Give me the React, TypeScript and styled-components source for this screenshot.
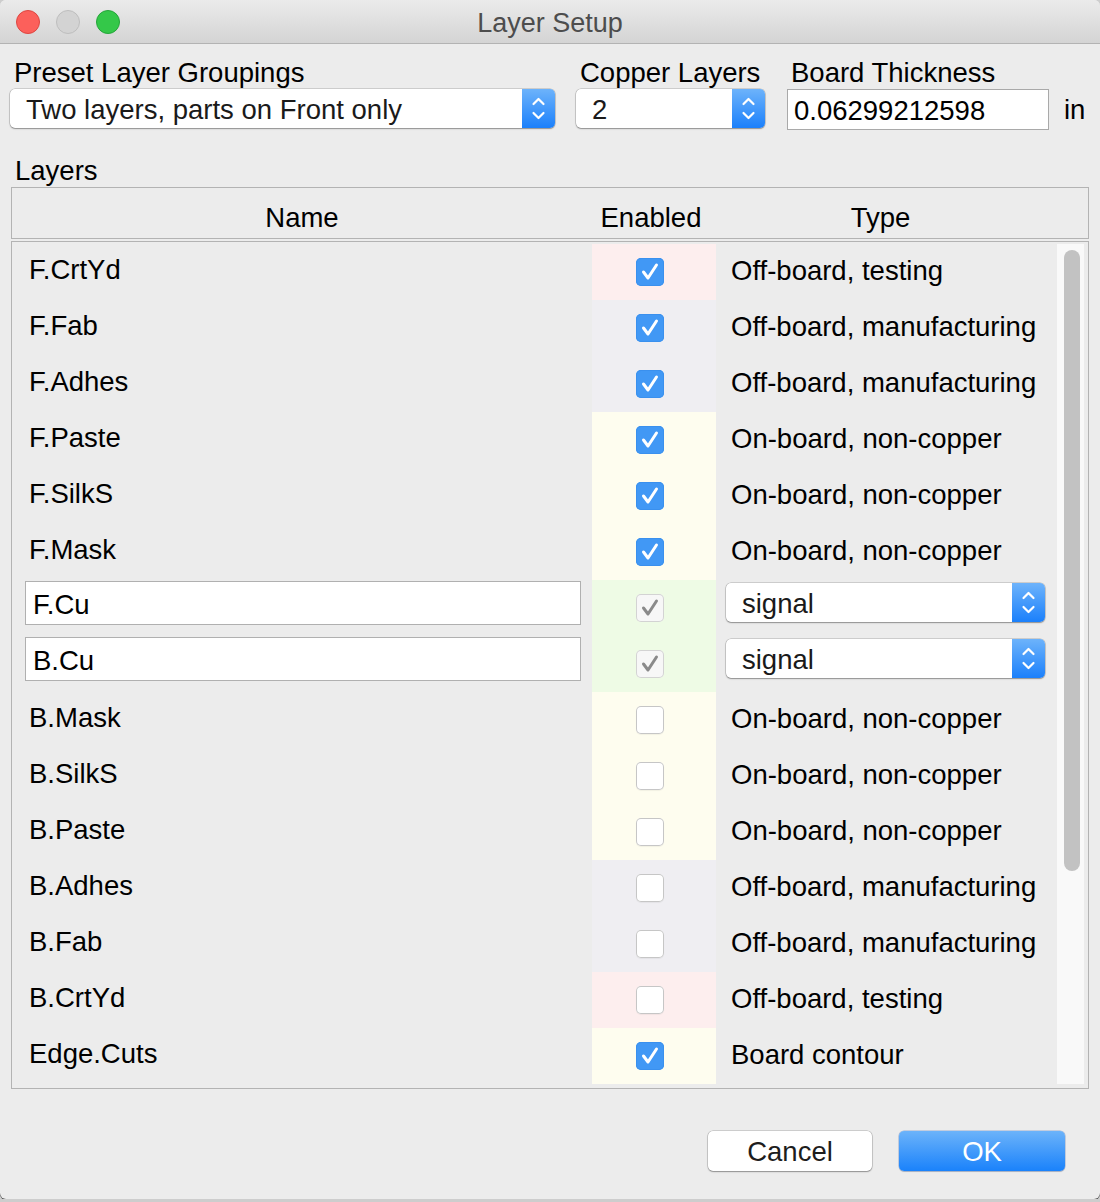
import React from 'react';
import styled, { createGlobalStyle, css } from 'styled-components';

const GlobalStyle = createGlobalStyle`
  html, body { margin: 0; padding: 0; background: #cdcdcd; }
  body {
    font-family: "Liberation Sans", Arial, sans-serif;
    font-size: 27.5px;
    color: #000;
  }
  * { box-sizing: border-box; }
`;

const Window = styled.div`
  width: 1100px;
  height: 1199px;
  background: #ececec;
  border-radius: 6px;
  overflow: hidden;
  display: flex;
  flex-direction: column;
  box-shadow: 0 1px 0 #4a4a4a;
`;

const TitleBar = styled.div`
  height: 44px;
  flex: none;
  display: grid;
  grid-template-columns: 1fr auto 1fr;
  align-items: center;
  background: linear-gradient(#ebebeb, #d4d4d4);
  border-bottom: 1px solid #b3b3b3;
`;

const Lights = styled.div`
  display: flex;
  gap: 16px;
  padding-left: 16px;
`;

const Light = styled.span<{ $fill: string; $edge: string }>`
  width: 24px;
  height: 24px;
  border-radius: 50%;
  background: ${(p) => p.$fill};
  border: 1px solid ${(p) => p.$edge};
`;

const Title = styled.div`
  color: #4d4d4d;
  font-size: 27px;
  line-height: 32px;
  padding-top: 2px;
`;

const Content = styled.div`
  padding: 13px 11px 0 10px;
  display: flex;
  flex-direction: column;
`;

const TopRow = styled.div`
  display: flex;
  align-items: flex-start;
`;

const Field = styled.div<{ $w: number; $gap: number }>`
  width: ${(p) => p.$w}px;
  margin-left: ${(p) => p.$gap}px;
  display: flex;
  flex-direction: column;
`;

const Label = styled.div`
  line-height: 32px;
  padding-left: 4px;
  white-space: nowrap;
`;

const Combo = styled.div<{ $w?: number }>`
  display: flex;
  height: 39px;
  width: ${(p) => (p.$w ? `${p.$w}px` : 'auto')};
  background: #fff;
  border-radius: 5px;
  overflow: hidden;
  box-shadow: 0 0 0 0.5px rgba(0, 0, 0, 0.25), 0 1px 1.5px rgba(0, 0, 0, 0.3);
`;

const ComboText = styled.span`
  flex: 1;
  padding: 2px 0 0 16px;
  line-height: 37px;
  color: #1a1a1a;
  white-space: nowrap;
  overflow: hidden;
`;

const Stepper = styled.span`
  width: 33px;
  flex: none;
  background: linear-gradient(#6db3fb, #1b80fb);
  display: flex;
  align-items: center;
  justify-content: center;
`;

const TextBox = styled.div`
  height: 41px;
  background: #fff;
  border: 1px solid #a9a9a9;
  padding: 3px 0 0 6px;
  line-height: 36px;
`;

const Unit = styled.span`
  margin: 32px 0 0 15px;
  line-height: 41px;
`;

const SectionLabel = styled.div`
  margin-top: 25px;
  line-height: 32px;
  padding-left: 5px;
`;

const TableHeader = styled.div`
  margin-left: 1px;
  width: 1078px;
  height: 52px;
  border: 1px solid #b3b3b3;
  display: grid;
  grid-template-columns: 580px 118px 341px 1fr;
  padding-top: 14px;
`;

const HeaderCell = styled.div`
  text-align: center;
  line-height: 32px;
  white-space: nowrap;
`;

const TableBody = styled.div`
  margin-left: 1px;
  margin-top: 2px;
  width: 1078px;
  height: 848px;
  border: 1px solid #b3b3b3;
  padding: 2px 4px 4px 0;
  display: flex;
`;

const Rows = styled.div`
  width: 1045px;
  display: flex;
  flex-direction: column;
`;

const Row = styled.div`
  height: 56px;
  display: grid;
  grid-template-columns: 580px 124px 341px;
`;

const NameCell = styled.div<{ $editing?: boolean }>`
  display: flex;
  white-space: nowrap;
  ${(p) =>
    p.$editing
      ? css`
          align-items: flex-start;
          padding: 1px 0 0 13px;
        `
      : css`
          align-items: center;
          padding: 0 0 4px 17px;
        `}
`;

const NameInput = styled.div`
  width: 556px;
  height: 44px;
  background: #fff;
  border: 1px solid #b0b0b0;
  padding: 3px 0 0 7px;
  line-height: 39px;
`;

const EnabledCell = styled.div<{ $bg: string }>`
  background: ${(p) => p.$bg};
  display: flex;
  align-items: center;
  justify-content: center;
  padding-right: 8px;
`;

const TypeCell = styled.div<{ $editing?: boolean }>`
  display: flex;
  white-space: nowrap;
  ${(p) =>
    p.$editing
      ? css`
          align-items: flex-start;
          padding: 3px 0 0 10px;
        `
      : css`
          align-items: center;
          padding: 0 0 3px 15px;
        `}
`;

const Box = styled.span<{ $state: 'on' | 'off' | 'locked' }>`
  width: 28px;
  height: 28px;
  border-radius: 5px;
  display: flex;
  align-items: center;
  justify-content: center;
  ${(p) =>
    p.$state === 'on'
      ? css`
          background: #4198f5;
          box-shadow: inset 0 0 0 1px #3a90ee;
        `
      : p.$state === 'off'
      ? css`
          background: #fff;
          box-shadow: inset 0 0 0 1px #c6c6c6, 0 1px 1px rgba(0, 0, 0, 0.05);
        `
      : css`
          background: #f7f7f7;
          box-shadow: inset 0 0 0 1px #d3d3d3;
        `}
`;

const Track = styled.div`
  width: 27px;
  background: #f9f9f9;
  padding: 6px 0 0 7px;
`;

const Thumb = styled.div`
  width: 16px;
  height: 621px;
  border-radius: 8px;
  background: #c2c2c2;
`;

const ButtonRow = styled.div`
  margin-top: 42px;
  display: flex;
  justify-content: flex-end;
  gap: 27px;
  padding-right: 24px;
`;

const Button = styled.button<{ $primary?: boolean }>`
  height: 40px;
  width: ${(p) => (p.$primary ? 166 : 164)}px;
  border: none;
  border-radius: 5px;
  font-family: inherit;
  font-size: 27.5px;
  padding: 2px 0 0;
  ${(p) =>
    p.$primary
      ? css`
          background: linear-gradient(#6cb3fa, #1a82fb);
          color: #fff;
          box-shadow: 0 0 0 0.5px rgba(0, 60, 160, 0.35), 0 1px 1px rgba(0, 0, 0, 0.15);
        `
      : css`
          background: #fff;
          color: #1d1d1d;
          box-shadow: 0 0 0 0.5px rgba(0, 0, 0, 0.25), 0 1px 1.5px rgba(0, 0, 0, 0.3);
        `}
`;

const StepperIcon = () => (
  <svg width="33" height="39" viewBox="0 0 33 39">
    <path d="M11.5 15 L16.5 10 L21.5 15" fill="none" stroke="#fff" strokeWidth="2.2" strokeLinecap="round" strokeLinejoin="round" />
    <path d="M11.5 24 L16.5 29 L21.5 24" fill="none" stroke="#fff" strokeWidth="2.2" strokeLinecap="round" strokeLinejoin="round" />
  </svg>
);

const CheckMark = ({ color, w }: { color: string; w: number }) => (
  <svg width="28" height="28" viewBox="0 0 28 28">
    <path d="M7.5 14 L12 20 L20.5 7" fill="none" stroke={color} strokeWidth={w} strokeLinecap="round" strokeLinejoin="round" />
  </svg>
);

const Checkbox = ({ state }: { state: 'on' | 'off' | 'locked' }) => (
  <Box $state={state}>
    {state === 'on' && <CheckMark color="#fff" w={3} />}
    {state === 'locked' && <CheckMark color="#8a8a8a" w={3} />}
  </Box>
);

const SelectBox = ({ text, width }: { text: string; width?: number }) => (
  <Combo $w={width}>
    <ComboText>{text}</ComboText>
    <Stepper>
      <StepperIcon />
    </Stepper>
  </Combo>
);

const PINK = '#fdeeee';
const LAV = '#efeef2';
const YEL = '#fefdef';
const GRN = '#eefbe5';

type Layer = {
  name: string;
  type: string;
  bg: string;
  state: 'on' | 'off' | 'locked';
  copper?: boolean;
};

const layers: Layer[] = [
  { name: 'F.CrtYd', type: 'Off-board, testing', bg: PINK, state: 'on' },
  { name: 'F.Fab', type: 'Off-board, manufacturing', bg: LAV, state: 'on' },
  { name: 'F.Adhes', type: 'Off-board, manufacturing', bg: LAV, state: 'on' },
  { name: 'F.Paste', type: 'On-board, non-copper', bg: YEL, state: 'on' },
  { name: 'F.SilkS', type: 'On-board, non-copper', bg: YEL, state: 'on' },
  { name: 'F.Mask', type: 'On-board, non-copper', bg: YEL, state: 'on' },
  { name: 'F.Cu', type: 'signal', bg: GRN, state: 'locked', copper: true },
  { name: 'B.Cu', type: 'signal', bg: GRN, state: 'locked', copper: true },
  { name: 'B.Mask', type: 'On-board, non-copper', bg: YEL, state: 'off' },
  { name: 'B.SilkS', type: 'On-board, non-copper', bg: YEL, state: 'off' },
  { name: 'B.Paste', type: 'On-board, non-copper', bg: YEL, state: 'off' },
  { name: 'B.Adhes', type: 'Off-board, manufacturing', bg: LAV, state: 'off' },
  { name: 'B.Fab', type: 'Off-board, manufacturing', bg: LAV, state: 'off' },
  { name: 'B.CrtYd', type: 'Off-board, testing', bg: PINK, state: 'off' },
  { name: 'Edge.Cuts', type: 'Board contour', bg: YEL, state: 'on' },
];

export default function App() {
  return (
    <>
      <GlobalStyle />
      <Window>
        <TitleBar>
          <Lights>
            <Light $fill="#fc605b" $edge="#de4641" />
            <Light $fill="#d3d3d3" $edge="#bebebe" />
            <Light $fill="#34c849" $edge="#25a53a" />
          </Lights>
          <Title>Layer Setup</Title>
          <span />
        </TitleBar>
        <Content>
          <TopRow>
            <Field $w={545} $gap={0}>
              <Label>Preset Layer Groupings</Label>
              <SelectBox text="Two layers, parts on Front only" />
            </Field>
            <Field $w={189} $gap={21}>
              <Label>Copper Layers</Label>
              <SelectBox text="2" />
            </Field>
            <Field $w={262} $gap={22}>
              <Label>Board Thickness</Label>
              <TextBox>0.06299212598</TextBox>
            </Field>
            <Unit>in</Unit>
          </TopRow>
          <SectionLabel>Layers</SectionLabel>
          <TableHeader>
            <HeaderCell>Name</HeaderCell>
            <HeaderCell>Enabled</HeaderCell>
            <HeaderCell>Type</HeaderCell>
          </TableHeader>
          <TableBody>
            <Rows>
              {layers.map((l) => (
                <Row key={l.name}>
                  <NameCell $editing={l.copper}>
                    {l.copper ? <NameInput>{l.name}</NameInput> : l.name}
                  </NameCell>
                  <EnabledCell $bg={l.bg}>
                    <Checkbox state={l.state} />
                  </EnabledCell>
                  <TypeCell $editing={l.copper}>
                    {l.copper ? <SelectBox text={l.type} width={319} /> : l.type}
                  </TypeCell>
                </Row>
              ))}
            </Rows>
            <Track>
              <Thumb />
            </Track>
          </TableBody>
          <ButtonRow>
            <Button>Cancel</Button>
            <Button $primary>OK</Button>
          </ButtonRow>
        </Content>
      </Window>
    </>
  );
}
